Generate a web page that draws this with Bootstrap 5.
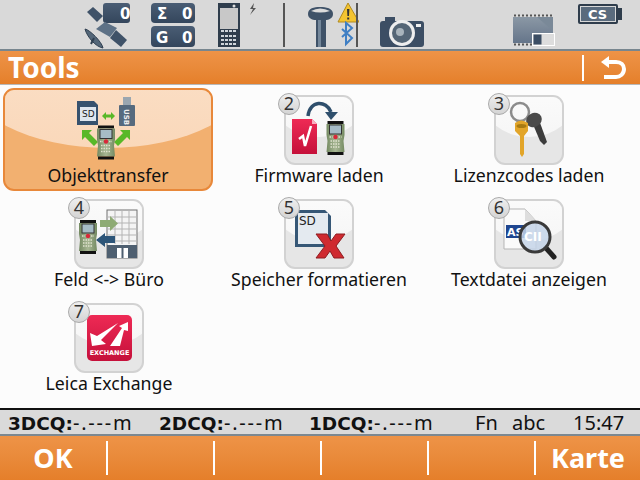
<!DOCTYPE html>
<html lang="de">
<head>
<meta charset="UTF-8">
<title>Tools</title>
<link href="https://cdn.jsdelivr.net/npm/bootstrap@5.3.0/dist/css/bootstrap.min.css" rel="stylesheet">
<style>
  html, body { margin: 0; width: 640px; height: 480px; overflow: hidden; background: #fcfcfc; }
  body { font-family: "Noto Sans", "DejaVu Sans", sans-serif; color: #111; }
  .screen { width: 640px; height: 480px; }
  .top-bar { height: 51px; background: #d9d9d9; border-bottom: 2px solid #78868f; padding-left: 84px; }
  .top-bar svg { display: block; flex: none; }
  .top-bar text { font-family: "DejaVu Sans", sans-serif; fill: #fff; font-weight: 700; }
  .m21 { margin-left: 21px; }
  .m22 { margin-left: 22px; }
  .m23 { margin-left: 23px; }
  .m25 { margin-left: 25px; }
  .m88 { margin-left: 88px; }
  .top-sep { width: 2px; height: 44px; margin-top: 3px; background: #555; flex: none; }
  .orange-bar { background: linear-gradient(#ee9347, #e98a3a 50%, #e57f2a); color: #fff; font-weight: 700; }
  .title-bar { height: 34px; border-bottom: 1px solid #b8b8b8; padding-left: 8px; font-size: 28px; line-height: 33px; }
  .title-sep { width: 2px; height: 26px; background: #fff; margin-right: 17px; }
  .back-ico { margin-right: 14px; }
  .tool-area { height: 324px; padding: 3px 6px 0 4px; }
  .tool-item { position: relative; height: 104px; padding-top: 7px; font-size: 17.7px; line-height: 20px; text-align: center; white-space: nowrap; }
  .tool-item.active-tool { margin-left: -1px; margin-right: 1px; padding-top: 7px; border: 2px solid #e8883a; border-radius: 11px; background: #f2b070; overflow: hidden; height: 103px; }
  .active-tool::before { content: ""; position: absolute; left: -40px; right: -40px; top: -90px; height: 148px; border-radius: 50%; background: linear-gradient(#fbe4cf, #fad8ba); }
  .active-tool .tool-tile { border: 0; background: none; margin-top: -2px; }
  .active-tool .tool-tile::before { display: none; }
  .tool-tile { position: relative; width: 70px; height: 70px; border: 2px solid #d2d2d2; border-radius: 11px; background: #e6e6e6; overflow: hidden; margin: 0 auto; }
  .tool-tile::before { content: ""; position: absolute; left: -15px; right: -15px; top: -42px; height: 82px; border-radius: 50%; background: linear-gradient(#fff, #f6f6f6); }
  .tool-tile svg { position: absolute; left: -2px; top: -2px; }
  .tool-name { position: relative; }
  .tool-num { position: absolute; left: 50%; margin-left: -41px; top: 5px; width: 22px; height: 22px; border-radius: 50%; border: 1px solid #aaa; background: linear-gradient(#efefef, #d4d4d4); color: #333; font-size: 18px; line-height: 19px; z-index: 2; }
  .info-bar { height: 28px; background: #dadada; border-top: 2px solid #111; border-bottom: 2px solid #7d8890; padding: 0 15px 0 8px; font-size: 20px; line-height: 25px; white-space: nowrap; }
  .info-bar b { font-family: "DejaVu Sans", sans-serif; font-size: 18.500px; font-weight: 700; }
  .qual-val { letter-spacing: 1.800px; }
  .qual-a { width: 151px; }
  .qual-b { width: 150px; }
  .qual-last { width: 166px; }
  .mode-fn { width: 37px; }
  .mode-abc { width: 61px; }
  .soft-bar { height: 44px; padding: 5px 0; font-size: 27px; line-height: 34px; }
  .soft-key { width: 107px; text-align: center; border-left: 2px solid #fff; }
  .soft-key:first-child { width: 106px; border-left: 0; }
  .soft-key:last-child { width: 106px; }
</style>
</head>
<body>
<svg width="0" height="0" class="position-absolute">
  <defs>
    <linearGradient id="bodyG" x1="0" y1="0" x2="1" y2="0"><stop offset="0" stop-color="#748a62"/><stop offset=".5" stop-color="#a8b794"/><stop offset="1" stop-color="#748a62"/></linearGradient>
    <linearGradient id="redG" x1="0" y1="0" x2="0" y2="1"><stop offset="0" stop-color="#ee2a55"/><stop offset="1" stop-color="#c5103a"/></linearGradient>
    <linearGradient id="slateG" x1="0" y1="0" x2="0" y2="1"><stop offset="0" stop-color="#4a5d74"/><stop offset="1" stop-color="#34465c"/></linearGradient>
    <linearGradient id="chipG" x1="0" y1="0" x2="0" y2="1"><stop offset="0" stop-color="#8b98a5"/><stop offset="1" stop-color="#65758a"/></linearGradient>
    <symbol id="handheld" viewBox="0 0 18 34">
      <rect x="1" y="0" width="16" height="3" fill="#111"/>
      <path d="M0 3H18V14L17 20L18 31H0L1 20L0 14Z" fill="url(#bodyG)"/>
      <rect x="3" y="4" width="12" height="9" fill="#a6bcc6" stroke="#333"/>
      <circle cx="9" cy="16" r="2.200" fill="#d8283a"/>
      <path d="M3 16h3M12 16h3M4 20h10M4 23h10M4 26h10" stroke="#dfe2ce" stroke-width="1.300" stroke-dasharray="1.500 1"/>
      <rect x="1" y="31" width="16" height="3" fill="#111"/>
    </symbol>
  </defs>
</svg>
<div class="screen d-flex flex-column">
  <div class="top-bar d-flex">
    <svg width="46" height="50" viewBox="0 0 46 50">
      <rect x="19" y="3" width="27" height="20" rx="3" fill="url(#slateG)"/>
      <text x="36" y="19" font-size="15">0</text>
      <path d="M3 12L9 7L19 16L13 22Z" fill="#3f5268"/>
      <path d="M21 22L33 28L26 37L12 29Z" fill="#5d7186"/>
      <path d="M26 38L32 30L43 40L37 47Z" fill="#3f5268"/>
      <path d="M1 29C6 30 18 42 19 48C12 47 3 37 1 29Z" fill="#546779" stroke="#2f3f50"/>
      <path d="M10 38L7 44" stroke="#2f3f50" stroke-width="2"/>
    </svg>
    <svg class="m21" width="44" height="50" viewBox="0 0 44 50">
      <rect y="3" width="44" height="20" rx="4" fill="url(#slateG)"/>
      <rect y="26" width="44" height="21" rx="4" fill="url(#slateG)"/>
      <text x="6" y="19" font-size="15">Σ</text><text x="31" y="19" font-size="15">0</text>
      <text x="5" y="43" font-size="15">G</text><text x="31" y="43" font-size="15">0</text>
    </svg>
    <svg class="m23" width="40" height="50" viewBox="0 0 40 50">
      <rect x="0" y="3" width="22" height="44" fill="#2f3d4c"/>
      <rect x="2" y="8" width="18" height="21" fill="#c8c8c8"/>
      <circle cx="16" cy="6" r="1.500" fill="#ddd"/>
      <path d="M3 31h16M3 36h16M3 40h16M3 44h16" stroke="#cfd5da" stroke-width="2" stroke-dasharray="3 1"/>
      <path d="M36 3L32 9H35L32 15L38 8H35Z" fill="#555"/>
    </svg>
    <div class="top-sep m25"></div>
    <svg class="m22" width="52" height="50" viewBox="0 0 52 50">
      <path d="M1 14C1 8 7 7 13 7C19 7 26 8 26 14C26 18 22 20 18 20H9C5 20 1 18 1 14Z" fill="#3f5268"/>
      <path d="M4 11Q13 6 23 11Q13 14 4 11Z" fill="#dcdcdc"/>
      <rect x="9" y="20" width="10" height="27" fill="#3f5268"/>
      <rect x="11" y="20" width="3" height="27" fill="#74879a"/>
      <path d="M41 3L52 22H31Z" fill="#f4c430" stroke="#b08a20"/>
      <path d="M40 9h2.400l-.4 7h-1.600ZM40.200 17.500h2v2h-2Z" fill="#333"/>
      <path d="M35 29L45 38L39 44V23L45 28L35 37" fill="none" stroke="#3f7fc4" stroke-width="2"/>
      <rect x="49" y="3" width="2" height="44" fill="#555"/>
    </svg>
    <svg class="m21" width="44" height="50" viewBox="0 0 44 50">
      <rect x="0" y="21" width="44" height="26" rx="3" fill="#3c4e64"/>
      <rect x="5" y="17" width="10" height="5" fill="#3c4e64"/>
      <rect x="36" y="24" width="5" height="3" fill="#eee"/>
      <circle cx="22" cy="33" r="13" fill="#eee"/>
      <circle cx="22" cy="33" r="10" fill="#556676"/>
      <circle cx="20" cy="32" r="4" fill="#a9b4bc"/>
    </svg>
    <svg class="m88" width="43" height="50" viewBox="0 0 43 50">
      <path d="M1 17H41V43H1Z" fill="url(#chipG)"/>
      <path d="M25 17L41 31V17Z" fill="#7a8998"/>
      <path d="M2 15.500H40M2 44.500H40" stroke="#555" stroke-width="2" stroke-dasharray="2 2"/>
      <rect x="20.500" y="33.500" width="22" height="12" fill="#ddd" stroke="#fff"/>
      <rect x="21.500" y="34.500" width="8" height="10" fill="#3c4e64"/>
    </svg>
    <svg class="m23" width="44" height="50" viewBox="0 0 44 50">
      <rect x="0" y="4" width="40" height="20" rx="2" fill="#2f3d4c"/>
      <rect x="40" y="8" width="4" height="12" fill="#2f3d4c"/>
      <rect x="2.500" y="6.500" width="35" height="15" fill="#5a6b7d" stroke="#d8d8d8"/>
      <text x="10" y="19" font-size="13">CS</text>
    </svg>
  </div>

  <div class="orange-bar title-bar d-flex align-items-center justify-content-between">
    <span>Tools</span>
    <div class="d-flex align-items-center">
      <div class="title-sep"></div>
      <svg class="back-ico" width="25" height="24" viewBox="0 0 25 24">
        <path d="M4 6H15C20 6 23 9 23 13C23 18 19 21 15 21H3" fill="none" stroke="#fff" stroke-width="4"/>
        <path d="M0 6L8 0V12Z" fill="#fff"/>
      </svg>
    </div>
  </div>

  <div class="tool-area">
    <div class="row g-0">
      <div class="col-4">
        <div class="tool-item active-tool">
          <div class="tool-tile">
            <svg width="70" height="70" viewBox="0 0 70 70">
              <path d="M6 8H23L27 12V32H6Z" fill="#37526e"/>
              <rect x="9" y="14" width="16" height="14" fill="#dfe6ee"/>
              <text x="11" y="24" font-size="9" font-family="DejaVu Sans" fill="#222">SD</text>
              <rect x="52" y="4" width="8" height="9" fill="#9aa6b0"/>
              <rect x="48" y="12" width="16" height="21" rx="1" fill="#566a7e"/>
              <text font-size="7" font-family="DejaVu Sans" font-weight="700" fill="#eee" transform="translate(53 16) rotate(90)">USB</text>
              <path d="M31 23L35 19V21.500H40V19L44 23L40 27V24.500H35V27Z" fill="#58b828"/>
              <path d="M11 37H21L18 40L27 49L23 53L14 44L11 47Z" fill="#58b828"/>
              <path d="M59 37H49L52 40L43 49L47 53L56 44L59 47Z" fill="#58b828"/>
              <use href="#handheld" x="26" y="32" width="18" height="35"/>
            </svg>
          </div>
          <div class="tool-name">Objekttransfer</div>
        </div>
      </div>
      <div class="col-4">
        <div class="tool-item">
          <span class="tool-num">2</span>
          <div class="tool-tile">
            <svg width="70" height="70" viewBox="0 0 70 70">
              <path d="M8 24H28L33 29V59H8Z" fill="url(#redG)"/>
              <path d="M28 24V29H33Z" fill="#f8b0c0"/>
              <path d="M15 44L19 41L21 51L27 31" fill="none" stroke="#fff" stroke-width="2.500"/>
              <path d="M24 21C26 5 42 5 47 17" fill="none" stroke="#2f4f6c" stroke-width="3.500"/>
              <path d="M41 17H54L47 25Z" fill="#2f4f6c"/>
              <use href="#handheld" x="42" y="26" width="19" height="34"/>
            </svg>
          </div>
          <div class="tool-name">Firmware laden</div>
        </div>
      </div>
      <div class="col-4">
        <div class="tool-item">
          <span class="tool-num">3</span>
          <div class="tool-tile">
            <svg width="70" height="70" viewBox="0 0 70 70">
              <circle cx="26" cy="17" r="9" fill="none" stroke="#8c8c8c" stroke-width="2.500"/>
              <path d="M38 27L46 46L50 50L53 47L45 25Z" fill="#3c3c3c"/>
              <ellipse cx="40" cy="25" rx="8" ry="7" fill="#4a4a4a" transform="rotate(-25 40 25)"/>
              <path d="M21 28Q27 23 34 28V36L30 41V59L28 62L26 59V41L21 36Z" fill="#e2a52a"/>
              <ellipse cx="27.500" cy="31" rx="5" ry="2" fill="#a87a12"/>
            </svg>
          </div>
          <div class="tool-name">Lizenzcodes laden</div>
        </div>
      </div>
      <div class="col-4">
        <div class="tool-item">
          <span class="tool-num">4</span>
          <div class="tool-tile">
            <svg width="70" height="70" viewBox="0 0 70 70">
              <rect x="33" y="11" width="30" height="48" fill="#f4f4f4" stroke="#707070"/>
              <path d="M33 18H63M33 24H63M33 30H63M33 36H63M33 42H63M41 11V45M48 11V45M55 11V45" stroke="#b4b4b4"/>
              <rect x="33" y="46" width="30" height="13" fill="#4e5f70"/>
              <rect x="43" y="49" width="11" height="10" fill="#fff"/>
              <rect x="47.500" y="49" width="2" height="10" fill="#4e5f70"/>
              <use href="#handheld" x="5" y="21" width="18" height="34"/>
              <path d="M26 21H36V17L44 24.500L36 32V28H26Z" fill="#8eab74"/>
              <path d="M41 37H31V34L22 41L31 48V44H41Z" fill="#2d5578"/>
            </svg>
          </div>
          <div class="tool-name">Feld &lt;-&gt; Büro</div>
        </div>
      </div>
      <div class="col-4">
        <div class="tool-item">
          <span class="tool-num">5</span>
          <div class="tool-tile">
            <svg width="70" height="70" viewBox="0 0 70 70">
              <path d="M11 11H41L47 17V48H11Z" fill="#365776"/>
              <rect x="14" y="14" width="30" height="31" fill="#e4eaf0"/>
              <text x="15" y="26" font-size="12" font-family="DejaVu Sans" fill="#222">SD</text>
              <path d="M32 35H43L47 42L52 35H61L52 47L60 59H50L46 52L41 59H32L41 47Z" fill="#cf2a30" stroke="#8e1c20"/>
            </svg>
          </div>
          <div class="tool-name">Speicher formatieren</div>
        </div>
      </div>
      <div class="col-4">
        <div class="tool-item">
          <span class="tool-num">6</span>
          <div class="tool-tile">
            <svg width="70" height="70" viewBox="0 0 70 70">
              <path d="M10 10H31L42 22V50H10Z" fill="#fafafa" stroke="#b5b5b5"/>
              <path d="M31 10V22H42Z" fill="#ddd"/>
              <rect x="12" y="26" width="20" height="13" fill="#1f4690"/>
              <text x="13" y="36.500" font-size="11" font-weight="700" font-family="DejaVu Sans" fill="#fff">AS</text>
              <path d="M52 49L60 58" stroke="#222" stroke-width="5" stroke-linecap="round"/>
              <circle cx="41" cy="38" r="15" fill="#c4d4e8" fill-opacity=".85" stroke="#3a3a3a" stroke-width="3"/>
              <text x="30" y="42" font-size="12" font-weight="700" font-family="DejaVu Sans" fill="#fff">CII</text>
            </svg>
          </div>
          <div class="tool-name">Textdatei anzeigen</div>
        </div>
      </div>
      <div class="col-4">
        <div class="tool-item">
          <span class="tool-num">7</span>
          <div class="tool-tile">
            <svg width="70" height="70" viewBox="0 0 70 70">
              <rect x="13" y="12" width="45" height="46" rx="5" fill="url(#redG)"/>
              <path d="M44 20L23 33L16 30L18 43L32 41L27 37Z" fill="#fff"/>
              <path d="M36 43L46 43L50 27L54 28L54 19L45 23L48 25Z" fill="#fff"/>
              <text x="35.500" y="52" text-anchor="middle" font-size="6.500" font-weight="700" font-family="DejaVu Sans" fill="#fff">EXCHANGE</text>
            </svg>
          </div>
          <div class="tool-name">Leica Exchange</div>
        </div>
      </div>
    </div>
  </div>

  <div class="info-bar d-flex">
    <span class="qual-a"><b>3DCQ:</b><span class="qual-val">-.---m</span></span>
    <span class="qual-b"><b>2DCQ:</b><span class="qual-val">-.---m</span></span>
    <span class="qual-last"><b>1DCQ:</b><span class="qual-val">-.---m</span></span>
    <span class="mode-fn">Fn</span>
    <span class="mode-abc">abc</span>
    <span>15:47</span>
  </div>

  <div class="orange-bar soft-bar d-flex">
    <div class="soft-key">OK</div>
    <div class="soft-key"></div>
    <div class="soft-key"></div>
    <div class="soft-key"></div>
    <div class="soft-key"></div>
    <div class="soft-key">Karte</div>
  </div>
</div>
<script src="https://cdn.jsdelivr.net/npm/bootstrap@5.3.0/dist/js/bootstrap.bundle.min.js"></script>
</body>
</html>
